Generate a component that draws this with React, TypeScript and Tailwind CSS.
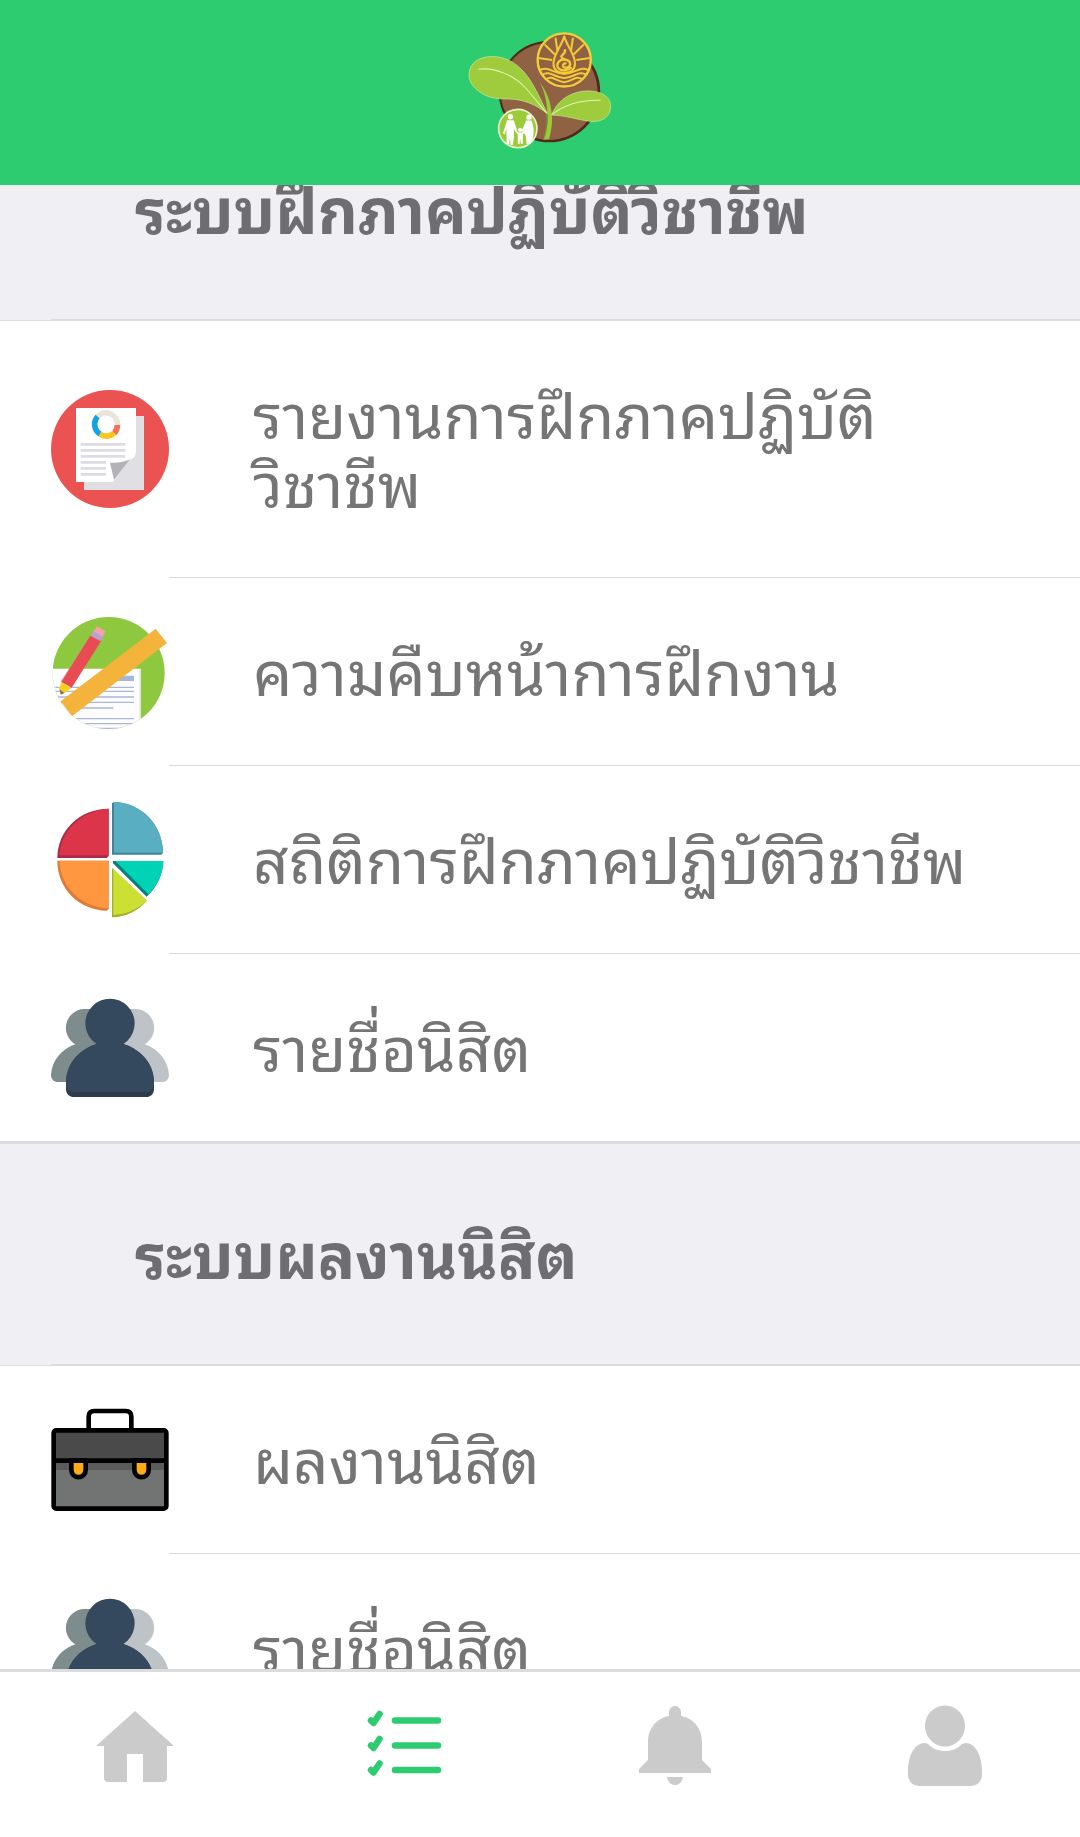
import React, { useState } from 'react';

interface MenuItem {
  id: string;
  label: string;
  icon: React.ReactNode;
}

interface MenuSection {
  id: string;
  title: string;
  items: MenuItem[];
}

function Logo() {
  return (
    <svg viewBox="58 38 428 352" className="w-36" role="img" aria-label="logo">
      <circle cx="300" cy="218" r="151" fill="#4f2a1c" />
      <circle cx="299" cy="218" r="144" fill="#8f6244" />
      {/* stem */}
      <path d="M272 192C290 215 304 245 307 286C310 312 304 340 299 359L282 361C292 335 297 308 294 284C292 246 286 220 272 192Z" fill="#9ccb3a" />
      <path d="M292 285C288 330 294 330 284 360" fill="none" stroke="#6f9c2a" strokeWidth="2" />
      {/* leaves */}
      <path d="M61 168C62 130 94 113 134 114C178 115 214 142 240 180C262 213 277 249 294 284C262 258 226 241 178 240C140 240 117 236 94 220C74 206 61 190 61 168Z" fill="#9fcc3c" stroke="#cfe59a" strokeWidth="2" />
      <path d="M88 152C140 144 196 172 228 206C250 230 270 256 292 282" fill="none" stroke="#e3f2b8" strokeWidth="3" />
      <path d="M306 288C322 250 352 224 398 217C444 212 482 228 482 262C482 292 458 309 424 307C384 302 344 288 306 288Z" fill="#9fcc3c" stroke="#cfe59a" strokeWidth="2" />
      <path d="M308 286C344 258 390 242 452 244" fill="none" stroke="#e3f2b8" strokeWidth="3" />
      {/* university seal */}
      <circle cx="344" cy="124" r="79" fill="#8f6244" stroke="#f4cf3a" strokeWidth="7" />
      <g fill="none" stroke="#f4c936" strokeWidth="6" strokeLinejoin="round">
        <path d="M344 54C336 84 312 106 312 134C312 152 324 162 344 162C364 162 376 152 376 134C376 106 352 84 344 54Z" />
        <path d="M318 58L324 98M286 78L316 108M268 118L308 124M370 58L364 98M402 78L372 108M420 118L380 124" />
        <path d="M272 154C300 142 312 164 344 166C376 164 388 142 416 154" />
        <path d="M278 168C302 154 314 176 344 178C374 176 386 154 410 168" />
        <path d="M290 182C308 168 320 188 344 190C368 188 380 168 398 182" />
        <path d="M350 136C344 130 336 142 344 146C354 150 366 142 360 130C354 120 340 124 336 116C332 108 350 108 346 92M350 124C330 118 316 138 328 150C338 158 358 156 366 146" strokeWidth="7" />
      </g>
      {/* family badge */}
      <circle cx="206" cy="328" r="57" fill="#9ccb3a" stroke="#e9f3c9" strokeWidth="5" />
      <g fill="#fff">
        <circle cx="184" cy="293" r="8" />
        <path d="M174 303L194 303L204 334L198 337L194 328L195 352L191 377L184 377L183 354L180 376L173 374L172 328L167 346L162 342Z" />
        <circle cx="239" cy="294" r="8" />
        <path d="M231 304L246 304C254 320 255 340 250 362L240 374L232 374L230 350L222 338L218 334Z" />
        <circle cx="213" cy="332" r="6" />
        <path d="M199 330L208 340L218 340L229 330L231 334L221 346L221 373L215 374L213 358L211 374L206 373L206 346L197 335Z" />
      </g>
    </svg>
  );
}

function ReportIcon() {
  return (
    <svg viewBox="63 60 354 354" className="size-full">
      <circle cx="240" cy="237" r="177" fill="#eb5252" />
      <path d="M162 138H342V360H162Z" fill="#e0dfe4" />
      <path d="M138 114H318V238C318 262 308 268 298 270L252 332L248 336H138Z" fill="#fff" />
      <path d="M300 268C284 276 262 280 240 278L252 330Z" fill="#b3b3b5" />
      <path d="M152 219h134v8h-134zM152 237h134v8h-134zM152 255h134v8h-134zM152 273h76v8h-76zM152 291h76v8h-76zM152 309h76v8h-76z" fill="#dddce2" />
      <g fill="none" strokeWidth="17">
        <path d="M201 142A34 34 0 0 1 262 165" stroke="#ece4da" />
        <path d="M262 165A34 34 0 0 1 253 189" stroke="#f0705b" />
        <path d="M253 189A34 34 0 0 1 210 192" stroke="#fac51e" />
        <path d="M210 192A34 34 0 0 1 203 140" stroke="#15a3e0" />
      </g>
    </svg>
  );
}

function ProgressIcon() {
  return (
    <svg viewBox="63 39 354 354" className="size-full">
      <clipPath id="progress-disc">
        <circle cx="236" cy="219" r="168" />
      </clipPath>
      <g clipPath="url(#progress-disc)">
        <path d="M60 40H410V400H60Z" fill="#8dc83f" />
        <path d="M60 206H330V400H60Z" fill="#fdfdff" />
        <path d="M328 206h5v190h-5z" fill="#dfe9d5" />
        <path d="M230 227H312V243H230Z" fill="#a7b6dd" />
        <path d="M76 262H312M76 274H312M76 291H312M76 307H312M120 324H250M100 356H312M100 371H312M180 385H290" stroke="#a9b7dc" strokeWidth="4" />
      </g>
      <path d="M186 100L92 244L98 252L200 120Z" fill="#b9a6b2" opacity=".7" />
      <path d="M184 102L215 121L125 263L94 246Z" fill="#e84b51" />
      <path d="M192 90L223 107L212 124L181 107Z" fill="#b9a3cb" />
      <path d="M202 79L226 94L218 110L190 94Z" fill="#f3a3ae" />
      <path d="M94 246L124 264L103 279L92 282L88 266Z" fill="#fbd01c" />
      <path d="M89 268L103 279L92 284Z" fill="#8c6b52" />
      <path d="M377 86L411 129L126 349L92 304Z" fill="#f4b43c" />
    </svg>
  );
}

function StatsIcon() {
  return (
    <svg viewBox="63 33 354 354" className="size-full" strokeLinejoin="round">
      <path d="M236 56V198L230 204H82C82 120 150 56 236 56Z" fill="#a82c4a" />
      <path d="M236 56V196H88C92 120 156 62 236 56Z" fill="#dc354a" />
      <path d="M246 40L252 36C334 38 398 104 399 188L394 194H246Z" fill="#3f8398" />
      <path d="M252 36C334 38 398 104 399 188H252Z" fill="#59aec2" />
      <path d="M82 212H236V356L230 362C146 360 82 296 82 212Z" fill="#dd7c34" />
      <path d="M88 212H236V355C152 352 92 290 88 212Z" fill="#ff9640" />
      <path d="M249 213H400C398 256 380 292 350 320L249 220Z" fill="#087f7c" />
      <path d="M256 213H400C398 254 382 286 355 313Z" fill="#00d3b5" />
      <path d="M246 234L351 332C322 364 288 380 246 382Z" fill="#9fb02b" />
      <path d="M250 237L351 332C322 358 290 372 250 375Z" fill="#cbe032" />
    </svg>
  );
}

function PeopleIcon() {
  return (
    <svg viewBox="63 27 354 354" className="size-full">
      <path d="M159 87A57 57 0 0 0 136 193C94 207 66 242 63 284C63 298 72 306 84 306H240V87Z" fill="#7f8c8d" />
      <path d="M321 87A57 57 0 0 1 344 193C386 207 414 242 417 284C417 298 408 306 396 306H240V87Z" fill="#bdc3c7" />
      <path d="M200 192H280C340 212 372 256 372 310V326C372 342 362 351 348 351H132C118 351 108 342 108 326V310C108 256 140 212 200 192Z" fill="#2e3b4b" />
      <path d="M200 192H280C340 212 372 256 372 310C372 326 362 336 348 336H132C118 336 108 326 108 310C108 256 140 212 200 192Z" fill="#34495e" />
      <circle cx="240" cy="130" r="74" fill="#34495e" />
    </svg>
  );
}

function BriefcaseIcon() {
  return (
    <svg viewBox="63 33 354 354" className="size-full">
      <path d="M71 121H409V357H71Z" fill="#727473" />
      <path d="M71 212H409V240H71Z" fill="#5b5b5b" />
      <path d="M71 121H409V212H71Z" fill="#4a4a4a" />
      <g stroke="#000" strokeWidth="14">
        <path d="M176 118V80Q176 63 193 63H287Q304 63 304 80V118" fill="none" />
        <rect x="71" y="121" width="338" height="235" rx="8" fill="none" />
        <path d="M124 212V240A21.500 21.500 0 0 0 167 240V212Z" fill="#ffaa17" />
        <path d="M313 212V240A21.500 21.500 0 0 0 356 240V212Z" fill="#ffaa17" />
        <path d="M71 212H409" />
      </g>
    </svg>
  );
}

function HomeIcon() {
  return (
    <svg viewBox="0 0 90 90" className="size-[90px]" fill="currentColor">
      <path d="M45 10L84 45H77V77Q77 81 73 81H53V53H37V81H18Q14 81 14 77V45H6Z" />
    </svg>
  );
}

function ChecklistIcon() {
  return (
    <svg viewBox="0 0 90 90" className="size-[90px]" fill="none" stroke="currentColor" strokeLinecap="round" strokeLinejoin="round">
      <path d="M35 19.500H78M35 44.500H78M35 69H78" strokeWidth="6.500" />
      <path d="M11 19.500L13.500 22L19.500 13M11 44.500L13.500 47L19.500 38M11 69L13.500 71.500L19.500 62.500" strokeWidth="6.500" />
    </svg>
  );
}

function BellIcon() {
  return (
    <svg viewBox="0 0 90 90" className="size-[90px]" fill="currentColor">
      <path d="M39 15V11A6 6 0 0 1 51 11V15C63 17 72 27 72 41V59L81 68V72H9V68L18 59V41C18 27 27 17 39 15Z" />
      <path d="M37 76H53C52 81 49 84 45 84S38 81 37 76Z" />
    </svg>
  );
}

function UserIcon() {
  return (
    <svg viewBox="0 0 90 90" className="size-[90px]" fill="currentColor">
      <ellipse cx="45" cy="25" rx="20" ry="20.500" />
      <path d="M25 42L28 43C33 48 38 50 45 50S57 48 62 43L66 42C75 42 82 54 82 70V73C82 81 77 85 70 85H20C13 85 8 81 8 73V70C8 54 15 42 25 42Z" />
    </svg>
  );
}

const sections: MenuSection[] = [
  {
    id: 'practice',
    title: 'ระบบฝึกภาคปฏิบัติวิชาชีพ',
    items: [
      { id: 'report', label: 'รายงานการฝึกภาคปฏิบัติวิชาชีพ', icon: <ReportIcon /> },
      { id: 'progress', label: 'ความคืบหน้าการฝึกงาน', icon: <ProgressIcon /> },
      { id: 'stats', label: 'สถิติการฝึกภาคปฏิบัติวิชาชีพ', icon: <StatsIcon /> },
      { id: 'students', label: 'รายชื่อนิสิต', icon: <PeopleIcon /> },
    ],
  },
  {
    id: 'portfolio',
    title: 'ระบบผลงานนิสิต',
    items: [
      { id: 'works', label: 'ผลงานนิสิต', icon: <BriefcaseIcon /> },
      { id: 'portfolio-students', label: 'รายชื่อนิสิต', icon: <PeopleIcon /> },
    ],
  },
];

const tabs = [
  { id: 'home', label: 'หน้าหลัก', icon: <HomeIcon /> },
  { id: 'menu', label: 'เมนู', icon: <ChecklistIcon /> },
  { id: 'alerts', label: 'แจ้งเตือน', icon: <BellIcon /> },
  { id: 'profile', label: 'โปรไฟล์', icon: <UserIcon /> },
];

export default function App() {
  const [activeTab, setActiveTab] = useState('menu');

  return (
    <div className="flex h-screen flex-col bg-white font-['Noto_Sans_Thai_Looped','Droid_Sans_Thai','Loma','Waree','Noto_Sans',sans-serif]">
      <header className="flex h-[185px] shrink-0 items-center justify-center bg-[#2ecc71] pb-1">
        <Logo />
      </header>

      <main className="min-h-0 flex-1 overflow-hidden">
        {/* list is scrolled a little way down */}
        <div className="-mt-[89px]">
          {sections.map((section) => (
            <section key={section.id}>
              <div className="border-t-3 border-b border-t-[#dcdce0] border-b-[#dcdce0] bg-[#efeff4]">
                <h2 className="flex h-[220px] items-center pb-[6px] pl-[135px] text-[62px] leading-[69px] font-bold text-[#6d6d72]">
                  {section.title}
                </h2>
                <div className="ml-[51px] border-t border-[#dcdce0]" />
              </div>
              <ul>
                {section.items.map((item) => (
                  <li key={item.id} className="group">
                    <button type="button" className="flex w-full items-center pl-[51px] text-left">
                      <span className="size-[118px] shrink-0">{item.icon}</span>
                      <span className="ml-[84px] flex-1 pt-[56px] pr-[84px] pb-[62px] text-[62px] leading-[69px] text-[#757575]">
                        {item.label}
                      </span>
                    </button>
                    <div className="ml-[169px] border-t border-[#d9d9dc] group-last:hidden" />
                  </li>
                ))}
              </ul>
            </section>
          ))}
        </div>
      </main>

      <nav className="grid h-[168px] shrink-0 grid-cols-4 border-t-3 border-[#dcdcdc] bg-white pb-[18px]">
        {tabs.map((tab) => (
          <button
            key={tab.id}
            type="button"
            aria-label={tab.label}
            onClick={() => setActiveTab(tab.id)}
            className={`flex items-center justify-center ${activeTab === tab.id ? 'text-[#2ecc71]' : 'text-[#cbcbcb]'}`}
          >
            {tab.icon}
          </button>
        ))}
      </nav>
    </div>
  );
}
